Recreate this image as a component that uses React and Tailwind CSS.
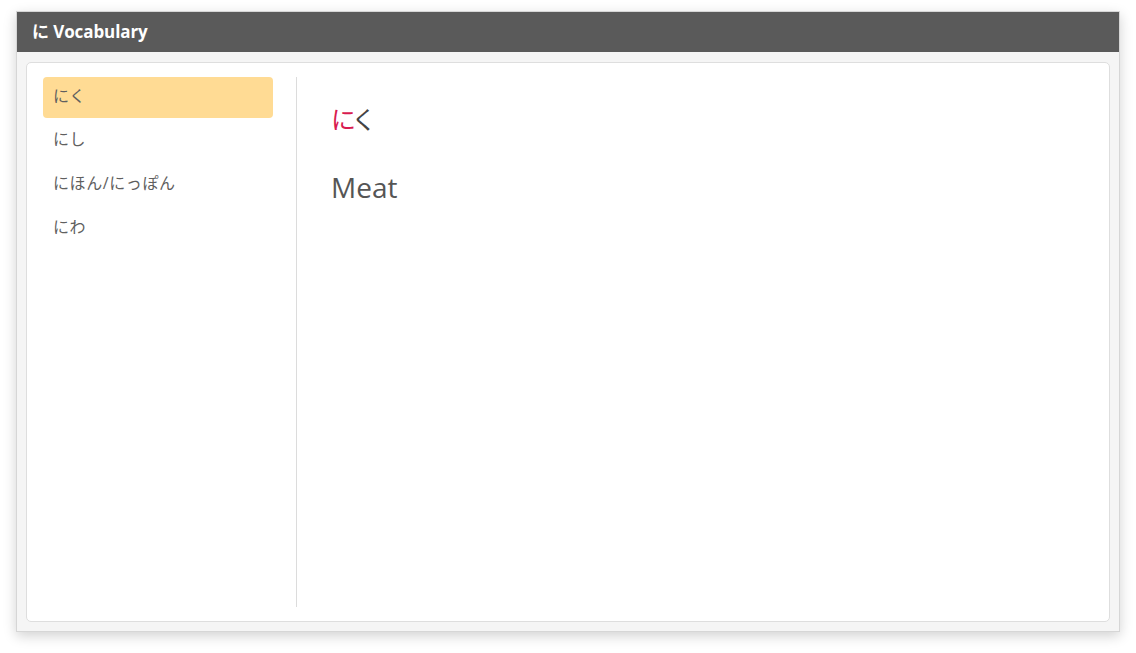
import React, { useState } from 'react';

const words = [
  { kana: 'にく', meaning: 'Meat' },
  { kana: 'にし', meaning: 'West' },
  { kana: 'にほん/にっぽん', meaning: 'Japan' },
  { kana: 'にわ', meaning: 'Garden' },
];

export default function App() {
  const [active, setActive] = useState(0);
  const word = words[active];

  return (
    <div className="w-[1136px] h-[653px] bg-white pt-[11px] pl-[16px] font-['Open_Sans','Noto_Sans_CJK_JP',sans-serif]">
      <div className="w-[1104px] h-[621px] flex flex-col bg-[#f5f5f5] border border-[#d6d6d6] shadow-[0_4px_12px_rgba(0,0,0,0.18)]">
        {/* Title bar */}
        <div className="h-[40px] shrink-0 bg-[#5a5a5a] flex items-center px-[15px] text-white text-[17px] font-bold tracking-[-0.1px]">
          <span>に Vocabulary</span>
        </div>

        {/* Body */}
        <div className="flex-1 px-[9px] pt-[10px] pb-[9px] flex">
          <div className="flex-1 bg-white border border-[#dedede] rounded-[5px] flex pt-[14px] pb-[14px] pl-[16px]">
            {/* Word list */}
            <div className="w-[254px] shrink-0 pr-[23px] border-r border-[#dcdcdc] flex flex-col gap-[2.7px]">
              {words.map((w, i) => (
                <button
                  key={w.kana}
                  onClick={() => setActive(i)}
                  className={`h-[41px] rounded-[4px] px-[10px] pb-[4px] text-left text-[16px] tracking-[0.6px] text-[#5f5f5f] ${
                    i === active ? 'bg-[#ffdb94]' : ''
                  }`}
                >
                  {w.kana}
                </button>
              ))}
            </div>

            {/* Detail */}
            <div className="flex-1 pl-[34px] pt-[22px]">
              <h1 className="text-[25px] leading-[40px] tracking-[-4px] text-[#444]">
                <span className="text-[#d81b50]">{word.kana.charAt(0)}</span>
                {word.kana.slice(1)}
              </h1>
              <p className="mt-[30px] text-[28px] leading-[36px] text-[#555]">{word.meaning}</p>
            </div>
          </div>
        </div>
      </div>
    </div>
  );
}
